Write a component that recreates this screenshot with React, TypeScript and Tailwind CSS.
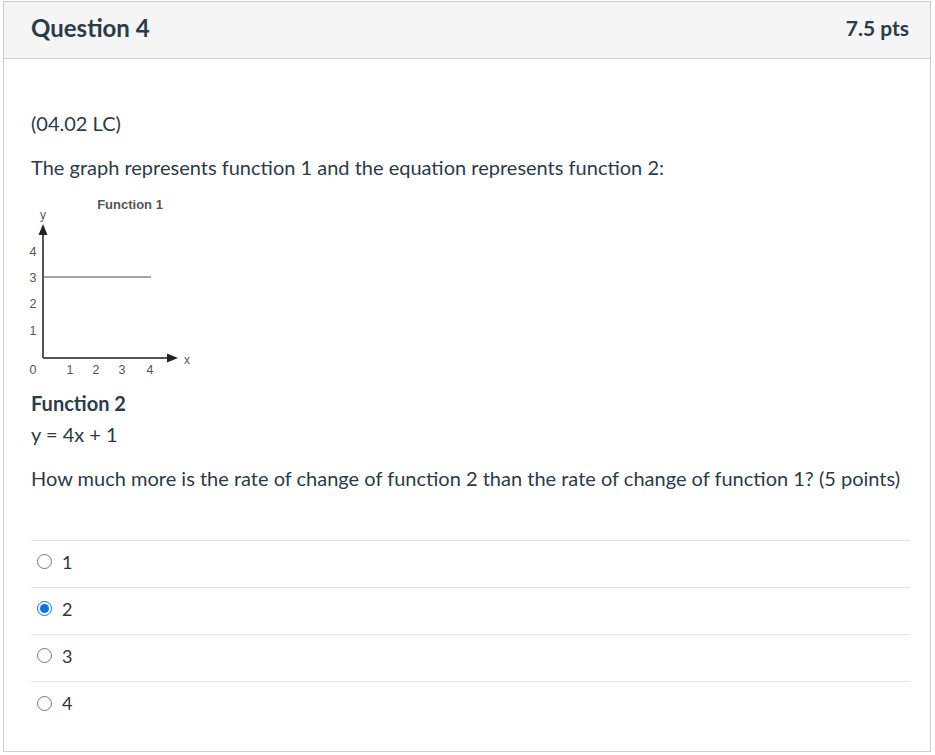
import { useState } from "react";

const answers = ["1", "2", "3", "4"];

function Graph() {
  const txt = { fontFamily: "'Liberation Sans', Arial, sans-serif", fill: "#555" };
  return (
    <svg width="190" height="190" viewBox="0 0 190 190" className="block">
      <text x="110" y="19" textAnchor="middle" fontSize="13" fontWeight="700" style={txt}>
        Function 1
      </text>
      <text x="23" y="29" textAnchor="middle" fontSize="12" style={txt}>
        y
      </text>
      {/* y axis */}
      <line x1="23" y1="168" x2="23" y2="44" stroke="#555" strokeWidth="2" />
      <polygon points="23,34 18.5,45 27.5,45" fill="#222" />
      {/* x axis */}
      <line x1="23" y1="168" x2="148" y2="168" stroke="#555" strokeWidth="2" />
      <polygon points="158,168 147,163.5 147,172.5" fill="#222" />
      <text x="167" y="174" textAnchor="middle" fontSize="12" style={txt}>
        x
      </text>
      {/* function line */}
      <line x1="24" y1="87" x2="131" y2="87" stroke="#888" strokeWidth="1.5" />
      {[
        ["4", 61],
        ["3", 87],
        ["2", 113],
        ["1", 140],
      ].map(([n, y]) => (
        <text key={n} x="13" y={Number(y) + 4.5} textAnchor="middle" fontSize="12.5" style={txt}>
          {n}
        </text>
      ))}
      <text x="13" y="184" textAnchor="middle" fontSize="12.5" style={txt}>
        0
      </text>
      {[
        ["1", 50],
        ["2", 76],
        ["3", 102],
        ["4", 130],
      ].map(([n, x]) => (
        <text key={n} x={x} y="184" textAnchor="middle" fontSize="12.5" style={txt}>
          {n}
        </text>
      ))}
    </svg>
  );
}

export default function App() {
  const [picked, setPicked] = useState("2");

  return (
    <div className="min-h-[755px] bg-white pl-[3px] pt-[1px] font-['Lato',_'Liberation_Sans',_sans-serif] text-[#2d3b45]">
      <div className="h-[751px] w-[928px] border border-[#c7cdd1]">
        <div className="flex h-[57px] items-center justify-between border-b border-[#c7cdd1] bg-[#f5f5f5] pb-[4px] pl-[27px] pr-[21px]">
          <h2 className="text-[24px] font-bold">Question 4</h2>
          <span className="text-[21px] font-bold">7.5 pts</span>
        </div>

        <div className="pl-[27px] pr-[20px] pt-[51px] text-[20px] leading-[26px]">
          <p>(04.02 LC)</p>
          <p className="mt-[18px]">The graph represents function 1 and the equation represents function 2:</p>
          <div className="mt-[10px] -ml-[11px]">
            <Graph />
          </div>
          <p className="mt-[10px] font-bold">Function 2</p>
          <p className="mt-[5px]">y = 4x + 1</p>
          <p className="mt-[18px] whitespace-nowrap">
            How much more is the rate of change of function 2 than the rate of change of function 1? (5 points)
          </p>

          <div className="mt-[49px] border-t border-[#e3e6e8]">
            {answers.map((a) => (
              <label
                key={a}
                className="flex h-[47px] cursor-pointer items-center border-b border-[#e3e6e8] pb-[5px] last:border-b-0"
              >
                <span className="ml-[6px] flex h-[15px] w-[15px] items-center justify-center">
                  <input
                    type="radio"
                    name="q4"
                    checked={picked === a}
                    onChange={() => setPicked(a)}
                    className="h-[15px] w-[15px] accent-[#0b74e5]"
                  />
                </span>
                <span className="ml-[10px] text-[18px] text-[#333]">{a}</span>
              </label>
            ))}
          </div>
        </div>
      </div>
    </div>
  );
}
